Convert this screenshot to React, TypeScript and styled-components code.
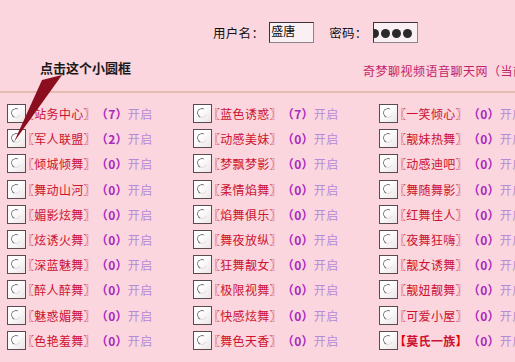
import React from 'react'
import styled, { createGlobalStyle } from 'styled-components'

const GlobalStyle = createGlobalStyle`
  html, body {
    margin: 0;
    padding: 0;
    background: #fcd6de;
    overflow: hidden;
  }
  body {
    font-family: "Noto Sans CJK SC", "Liberation Sans", sans-serif;
    font-size: 12px;
  }
`

const Page = styled.div`
  position: relative;
  width: 580px;
  height: 362px;
  overflow: hidden;
`

const Header = styled.header`
  height: 91px;
  display: flex;
  flex-direction: column;
  border-bottom: 2px solid #e2bcb0;
`

const LoginRow = styled.div`
  display: flex;
  align-items: center;
  padding: 22px 0 0 213px;
  height: 21px;
`

const Label = styled.span`
  font-size: 12.5px;
  letter-spacing: 0.3px;
  color: #111;
  margin-right: 5px;
`

const Field = styled.div<{ $masked?: boolean }>`
  box-sizing: border-box;
  width: 45px;
  height: 21px;
  border: 1px solid #8c8488;
  border-top-color: #3a3236;
  border-left-color: #3a3236;
  background: #faf0f3;
  overflow: hidden;
  display: flex;
  align-items: ${({ $masked }) => ($masked ? 'center' : 'flex-start')};
  padding: 1px 0 0 1px;
  font-size: 12px;
  line-height: 14px;
  color: #111;
  margin-right: 15px;
`

const Dot = styled.span`
  flex: none;
  width: 9px;
  height: 9px;
  border-radius: 50%;
  background: #2a2a2a;
  margin-right: 2px;
  &:first-child {
    margin-left: -5px;
  }
`

const InfoRow = styled.div`
  display: grid;
  grid-template-columns: 323px auto;
  align-items: center;
  padding-left: 40px;
  margin-top: 19px;
`

const Note = styled.span`
  font-weight: bold;
  font-size: 13px;
  color: #1a1a1a;
  margin-top: -6px;
`

const SiteLink = styled.a`
  font-size: 12px;
  letter-spacing: 0.5px;
  color: #c2246a;
  text-decoration: none;
  white-space: nowrap;
`

const Grid = styled.div`
  display: grid;
  grid-template-columns: repeat(3, 186px);
  grid-auto-rows: 25.2px;
  padding: 8px 0 0 7px;
`

const Cell = styled.div`
  display: flex;
  align-items: center;
  white-space: nowrap;
`

const RadioBox = styled.span`
  position: relative;
  flex: none;
  box-sizing: border-box;
  width: 19px;
  height: 19px;
  border: 1px solid #5b4a4f;
  background: linear-gradient(135deg, #ffffff 35%, #ece4e6);
`

const Ring = styled.span`
  position: absolute;
  left: 3px;
  top: 3px;
  box-sizing: border-box;
  width: 10px;
  height: 10px;
  border-radius: 50%;
  border: 1.5px solid;
  border-color: #767676 transparent #dcdcdc #767676;
  transform: rotate(-20deg);
`

const Name = styled.span<{ $strong?: boolean }>`
  color: #cc1230;
  letter-spacing: 0.3px;
  margin-left: -4px;
  font-weight: ${({ $strong }) => ($strong ? 'bold' : 'normal')};
`

const Bracket = styled.span<{ $strong?: boolean }>`
  color: ${({ $strong }) => ($strong ? '#e00000' : '#c0102a')};
  font-weight: ${({ $strong }) => ($strong ? 'bold' : 'normal')};
`

const Count = styled.span`
  color: #a828c0;
  font-weight: bold;
  letter-spacing: 0.3px;
`

const Status = styled.span`
  color: #b68ad8;
  letter-spacing: 0.5px;
`

const Arrow = styled.svg`
  position: absolute;
  left: 0;
  top: 0;
  pointer-events: none;
`

type Room = { name: string; count: number; strong?: boolean }

const columns: Room[][] = [
  [
    { name: '站务中心', count: 7 },
    { name: '军人联盟', count: 2 },
    { name: '倾城倾舞', count: 0 },
    { name: '舞动山河', count: 0 },
    { name: '媚影炫舞', count: 0 },
    { name: '炫诱火舞', count: 0 },
    { name: '深蓝魅舞', count: 0 },
    { name: '醉人醉舞', count: 0 },
    { name: '魅惑媚舞', count: 0 },
    { name: '色艳羞舞', count: 0 },
  ],
  [
    { name: '蓝色诱惑', count: 7 },
    { name: '动感美妹', count: 0 },
    { name: '梦飘梦影', count: 0 },
    { name: '柔情焰舞', count: 0 },
    { name: '焰舞俱乐', count: 0 },
    { name: '舞夜放纵', count: 0 },
    { name: '狂舞靓女', count: 0 },
    { name: '极限视舞', count: 0 },
    { name: '快感炫舞', count: 0 },
    { name: '舞色天香', count: 0 },
  ],
  [
    { name: '一笑倾心', count: 0 },
    { name: '靓妹热舞', count: 0 },
    { name: '动感迪吧', count: 0 },
    { name: '舞随舞影', count: 0 },
    { name: '红舞佳人', count: 0 },
    { name: '夜舞狂嗨', count: 0 },
    { name: '靓女诱舞', count: 0 },
    { name: '靓妞靓舞', count: 0 },
    { name: '可爱小屋', count: 0 },
    { name: '莫氏一族', count: 0, strong: true },
  ],
]

// table is filled row by row
const rooms: Room[] = columns[0].flatMap((_, i) => columns.map((col) => col[i]))

const RoomCell: React.FC<{ room: Room }> = ({ room }) => (
  <Cell>
    <RadioBox>
      <Ring />
    </RadioBox>
    <Name $strong={room.strong}>
      <Bracket $strong={room.strong}>{room.strong ? '【' : '〖'}</Bracket>
      {room.name}
      <Bracket $strong={room.strong}>{room.strong ? '】' : '〗'}</Bracket>
    </Name>
    <Count>（{room.count}）</Count>
    <Status>开启</Status>
  </Cell>
)

const App: React.FC = () => (
  <Page>
    <GlobalStyle />
    <Header>
      <LoginRow>
        <Label>用户名：</Label>
        <Field>盛唐</Field>
        <Label>密码：</Label>
        <Field $masked>
          <Dot />
          <Dot />
          <Dot />
          <Dot />
        </Field>
      </LoginRow>
      <InfoRow>
        <Note>点击这个小圆框</Note>
        <SiteLink href="#">奇梦聊视频语音聊天网（当前在线）</SiteLink>
      </InfoRow>
    </Header>
    <Grid>
      {rooms.map((room) => (
        <RoomCell key={room.name} room={room} />
      ))}
    </Grid>
    <Arrow width="70" height="150" viewBox="0 0 70 150">
      <polygon points="42,80 62,75 14,142" fill="#8a0e1e" />
    </Arrow>
  </Page>
)

export default App
